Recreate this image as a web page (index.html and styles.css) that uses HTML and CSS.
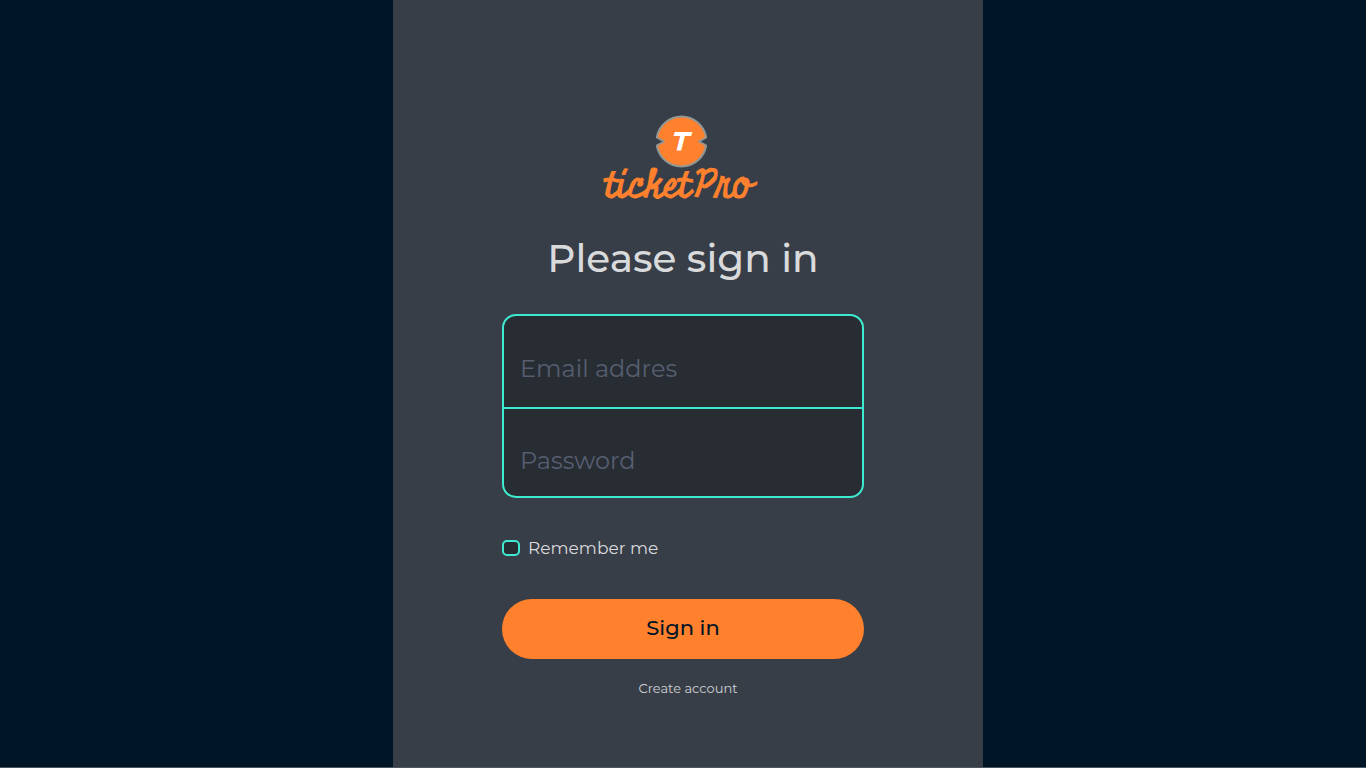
FILE: index.html
```html
<!DOCTYPE html>
<html lang="en">
<head>
<meta charset="utf-8">
<meta name="viewport" content="width=device-width, initial-scale=1">
<title>ticketPro - Sign in</title>
<link rel="stylesheet" href="styles.css">
</head>
<body>
<main class="panel">
  <form class="signin">
    <svg class="logo" width="160" height="88" viewBox="0 0 160 88" role="img" aria-label="ticketPro">
      <path class="badge" d="M53.820 24.500A25 25 0 0 1 103.180 24.500L96 28.500L103.180 32.500A25 25 0 0 1 53.820 32.500L61 28.500Z"/>
      <text class="badge-letter" x="76" y="37">T</text>
      <text class="wordmark" x="2" y="84">ticket<tspan class="wordmark-cap" dx="4">Pro</tspan></text>
    </svg>
    <h1 class="title">Please sign in</h1>
    <div class="fields">
      <input class="field" type="email" placeholder="Email addres" aria-label="Email address">
      <input class="field field-last" type="password" placeholder="Password" aria-label="Password">
    </div>
    <label class="remember"><input class="check" type="checkbox">Remember me</label>
    <button class="submit" type="submit">Sign in</button>
  </form>
  <a class="create" href="#create">Create account</a>
</main>
</body>
</html>
```

FILE: styles.css
```css
* {
  box-sizing: border-box;
}

body {
  margin: 0;
  min-height: 100vh;
  padding-left: 10px;
  display: flex;
  justify-content: center;
  background: #001525;
  border-bottom: 1px solid #4b5861;
  font-family: Montserrat, Inter, sans-serif;
  color: #d9dadc;
}

.panel {
  width: 100%;
  max-width: 590px;
  padding: 113px 24px 24px;
  display: flex;
  flex-direction: column;
  align-items: center;
  background: #383e48;
}

.signin {
  width: 100%;
  max-width: 372px;
  padding-right: 10px;
  display: flex;
  flex-direction: column;
}

.logo {
  align-self: center;
  overflow: visible;
}

.badge {
  fill: #ff812e;
  stroke: #929694;
  stroke-width: 2;
  stroke-linejoin: round;
}

.badge-letter {
  fill: #fff;
  font: italic 700 23px "Krona One", Montserrat, sans-serif;
  text-anchor: middle;
}

.wordmark {
  fill: #ff812e;
  stroke: #ff812e;
  stroke-width: 1;
  font: 400 38px Miniver, Galada, "Liberation Serif", serif;
}

.title {
  margin: 33px 0 31px;
  text-align: center;
  font-size: 39px;
  line-height: 49px;
  font-weight: 500;
}

.fields {
  overflow: hidden;
  border: 2px solid #3eebd0;
  border-radius: 14px;
  background: #282c33;
}

.field {
  display: block;
  width: 100%;
  height: 93px;
  padding: 14px 16px 0;
  border: 0;
  border-bottom: 2px solid #3eebd0;
  outline: 0;
  background: transparent;
  color: #d9dadc;
  font: 400 24px Montserrat, Inter, sans-serif;
}

.field-last {
  height: 87px;
  padding-top: 16px;
  border-bottom: 0;
}

.field::placeholder {
  color: #565e70;
  opacity: 1;
}

.remember {
  align-self: flex-start;
  margin: 38px 0 39px;
  display: flex;
  align-items: center;
  gap: 8px;
  font-size: 17px;
  line-height: 24px;
  font-weight: 400;
}

.check {
  appearance: none;
  width: 18px;
  height: 16px;
  margin: 0;
  border: 2px solid #3eebd0;
  border-radius: 5px;
  background: #282c33;
}

.check:checked {
  background: #3eebd0;
}

.submit {
  height: 60px;
  padding: 0 24px 4px;
  border: 0;
  border-radius: 30px;
  background: #ff812e;
  color: #001525;
  font: 500 21px Montserrat, Inter, sans-serif;
  cursor: pointer;
}

.create {
  margin-top: 19px;
  color: #d0d2d5;
  font-size: 13px;
  line-height: 20px;
  font-weight: 400;
  text-decoration: none;
}
```
